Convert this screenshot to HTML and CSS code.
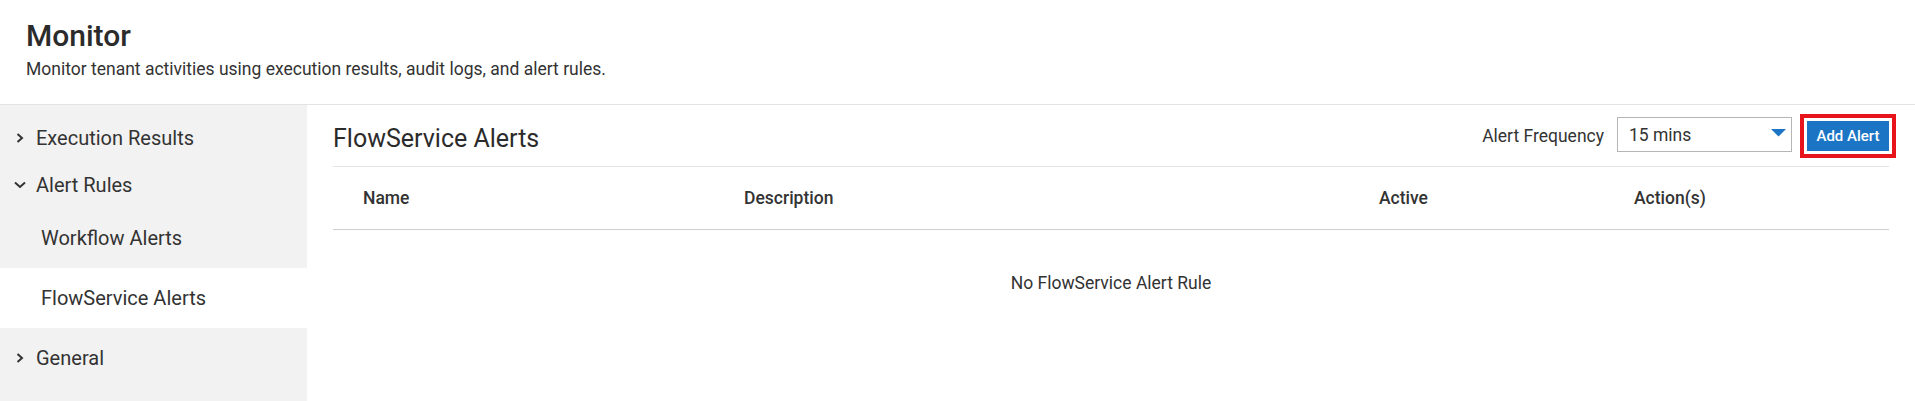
FILE: index.html
```html
<!DOCTYPE html>
<html lang="en">
<head>
<meta charset="utf-8">
<title>Monitor</title>
<link rel="stylesheet" href="styles.css">
</head>
<body>
<header class="page-header">
  <h1 class="page-title">Monitor</h1>
  <p class="page-subtitle">Monitor tenant activities using execution results, audit logs, and alert rules.</p>
</header>
<div class="layout">
  <nav class="sidebar">
    <div class="nav-item">
      <svg class="chev" width="12" height="12" viewBox="0 0 12 12"><path d="M3.5 2 L8 6 L3.5 10" fill="none" stroke="#333" stroke-width="2"/></svg>
      <span>Execution Results</span>
    </div>
    <div class="nav-item">
      <svg class="chev" width="12" height="12" viewBox="0 0 12 12"><path d="M1 3.5 L6 8 L11 3.5" fill="none" stroke="#333" stroke-width="2"/></svg>
      <span>Alert Rules</span>
    </div>
    <div class="nav-sub">Workflow Alerts</div>
    <div class="nav-sub active">FlowService Alerts</div>
    <div class="nav-item nav-tall">
      <svg class="chev" width="12" height="12" viewBox="0 0 12 12"><path d="M3.5 2 L8 6 L3.5 10" fill="none" stroke="#333" stroke-width="2"/></svg>
      <span>General</span>
    </div>
  </nav>
  <main class="content">
    <div class="content-head">
      <h2 class="content-title">FlowService Alerts</h2>
      <div class="toolbar">
        <span class="freq-label">Alert Frequency</span>
        <div class="select">
          <span>15 mins</span>
          <svg class="caret" width="15" height="8" viewBox="0 0 15 8"><path d="M0 0 H15 L7.5 7.5 Z" fill="#1b75c4"/></svg>
        </div>
        <button class="btn-add">Add Alert</button>
      </div>
    </div>
    <div class="table">
      <div class="thead">
        <div class="th col-name">Name</div>
        <div class="th col-desc">Description</div>
        <div class="th col-active">Active</div>
        <div class="th col-actions">Action(s)</div>
      </div>
      <div class="empty">No FlowService Alert Rule</div>
    </div>
  </main>
</div>
</body>
</html>
```
FILE: styles.css
```css
* { box-sizing: border-box; }
html, body { margin: 0; padding: 0; background: #fff; }
body {
  font-family: Roboto, "Noto Sans", "Liberation Sans", sans-serif;
  color: #333;
  width: 1915px;
  height: 401px;
  overflow: hidden;
}
.page-header {
  padding: 18px 26px 26px;
  border-bottom: 1px solid #e3e3e3;
  height: 105px;
}
.page-title {
  margin: 0;
  font-size: 30px;
  line-height: 36px;
  font-weight: 500;
  color: #2b2b2b;
}
.page-subtitle {
  margin: 5px 0 0;
  font-size: 17.5px;
  line-height: 20px;
  color: #333;
}
.layout {
  display: flex;
  height: 296px;
}
.sidebar {
  width: 307px;
  flex: none;
  background: #f2f2f2;
  padding-top: 9px;
}
.nav-item {
  height: 47px;
  display: flex;
  align-items: center;
  padding-left: 14px;
  font-size: 20px;
  color: #333;
}
.nav-item .chev { margin-right: 10px; flex: none; }
.nav-tall { height: 60px; }
.nav-sub {
  height: 60px;
  display: flex;
  align-items: center;
  padding-left: 41px;
  font-size: 20px;
  color: #333;
}
.nav-sub.active { background: #fff; }
.content {
  flex: 1;
  padding: 0 26px;
}
.content-head {
  height: 62px;
  display: flex;
  align-items: center;
  justify-content: space-between;
  border-bottom: 1px solid #e3e3e3;
}
.content-title {
  margin: 7px 0 0;
  font-size: 25px;
  line-height: 28px;
  font-weight: 400;
  color: #2b2b2b;
}
.toolbar {
  display: flex;
  align-items: center;
}
.freq-label {
  font-size: 17.5px;
  color: #333;
  margin-right: 13px;
}
.select {
  width: 175px;
  height: 35px;
  border: 1px solid #b5b5b5;
  display: flex;
  align-items: center;
  justify-content: space-between;
  padding: 0 5px 0 11px;
  font-size: 17.5px;
  color: #333;
  margin-top: -2px;
}
.select .caret { margin-top: -3px; }
.btn-add {
  margin-left: 15px;
  width: 82px;
  height: 30px;
  border: none;
  background: #1b75c4;
  color: #fff;
  font-family: inherit;
  font-size: 15px;
  font-weight: 500;
  padding: 0;
  outline: 4px solid #e8141c;
  outline-offset: 3px;
}
.thead {
  display: grid;
  grid-template-columns: 381px 635px 255px 1fr;
  height: 63px;
  align-items: center;
  border-bottom: 1px solid #cfcfcf;
}
.th {
  padding-left: 30px;
  font-size: 17.5px;
  font-weight: 500;
  color: #333;
}
.empty {
  text-align: center;
  padding: 43px 0;
  font-size: 17.5px;
  line-height: 20px;
  color: #333;
}
```
